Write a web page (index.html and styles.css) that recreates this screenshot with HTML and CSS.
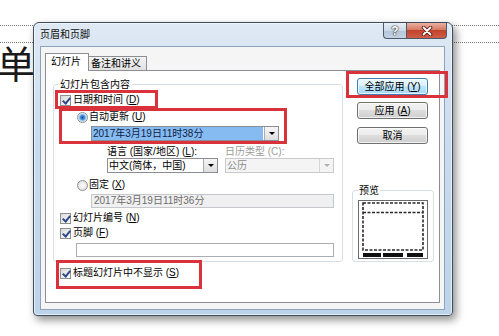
FILE: index.html
```html
<!DOCTYPE html>
<html lang="zh-CN">
<head>
  <meta charset="UTF-8" />
  <title>页眉和页脚</title>
  <link rel="stylesheet" href="styles.css">
</head>
<body>

  <div class="slide">
    <div class="rule"></div>
    <div class="rule short"></div>
    <div class="big-char">单</div>
  </div>

  <div class="dialog">
    <div class="titlebar">
      <span class="title">页眉和页脚</span>
      <div class="caption-btns">
        <span class="cap-btn help">?</span>
        <span class="cap-btn close">
          <svg width="12" height="10" viewBox="0 0 12 10">
            <path d="M2.5 1.5 L9.5 8.5 M9.5 1.5 L2.5 8.5" stroke="#5a1d14" stroke-width="3.6" stroke-linecap="round" fill="none"/>
            <path d="M2.5 1.5 L9.5 8.5 M9.5 1.5 L2.5 8.5" stroke="#fff" stroke-width="1.8" stroke-linecap="round" fill="none"/>
          </svg>
        </span>
      </div>
    </div>

    <div class="client">
      <div class="tabs">
        <span class="tab active">幻灯片</span>
        <span class="tab">备注和讲义</span>
      </div>

      <div class="panel">
        <div class="main">
          <fieldset class="group">
            <legend>幻灯片包含内容</legend>

            <div class="row r-date"><span class="box checked"></span>日期和时间 (<u>D</u>)</div>
            <div class="row r-auto"><span class="radio on"></span>自动更新 (<u>U</u>)</div>
            <div class="combo r-datebox">
              <span class="combo-text selected">2017年3月19日11时38分</span>
              <span class="drop"></span>
            </div>
            <div class="pair r-labels">
              <span>语言 (国家/地区) (<u>L</u>):</span>
              <span class="disabled">日历类型 (C):</span>
            </div>
            <div class="pair r-combos">
              <div class="combo">
                <span class="combo-text">中文(简体，中国)</span>
                <span class="drop"></span>
              </div>
              <div class="combo off">
                <span class="combo-text">公历</span>
                <span class="drop"></span>
              </div>
            </div>
            <div class="row r-fixed"><span class="radio"></span>固定 (<u>X</u>)</div>
            <div class="textbox off r-fixedbox">2017年3月19日11时36分</div>
            <div class="row r-num"><span class="box checked"></span>幻灯片编号 (<u>N</u>)</div>
            <div class="row r-footer"><span class="box checked"></span>页脚 (<u>F</u>)</div>
            <div class="textbox r-footbox"></div>
          </fieldset>

          <div class="row r-notitle"><span class="box checked"></span>标题幻灯片中不显示 (<u>S</u>)</div>
        </div>

        <div class="side">
          <button class="btn default">全部应用 (<u>Y</u>)</button>
          <button class="btn">应用 (<u>A</u>)</button>
          <button class="btn">取消</button>

          <fieldset class="preview">
            <legend>预览</legend>
            <svg class="thumb" width="70" height="59" viewBox="0 0 70 59">
              <rect x="0.5" y="0.5" width="69" height="58" fill="#fff" stroke="#6a6a6a"/>
              <rect x="5" y="3" width="60" height="47" fill="none" stroke="#2a2a2a" stroke-width="1.6" stroke-dasharray="3 1.5"/>
              <line x1="5" y1="12.5" x2="65" y2="12.5" stroke="#2a2a2a" stroke-width="1.6" stroke-dasharray="3 1.5"/>
              <rect x="5" y="53" width="18" height="4" fill="#111"/>
              <rect x="25" y="53" width="20" height="4" fill="#111"/>
              <rect x="49" y="53" width="16" height="4" fill="#111"/>
            </svg>
          </fieldset>
        </div>
      </div>
    </div>
  </div>

  <div class="mark mark-date"></div>
  <div class="mark mark-auto"></div>
  <div class="mark mark-title"></div>
  <div class="mark mark-apply"></div>

</body>
</html>
```

FILE: styles.css
```css
* {
  box-sizing: border-box;
}
body {
  margin: 0;
  width: 499px;
  height: 336px;
  overflow: hidden;
  position: relative;
  background: #fff;
  font-family: "Liberation Sans", "Noto Sans CJK SC", sans-serif;
  font-size: 10px;
  line-height: 14px;
  color: #000;
}
u {
  text-decoration: underline;
}

/* slide behind the dialog */
.slide {
  padding-top: 25px;
}
.rule {
  height: 17px;
  border-top: 1px dotted #7a7a7a;
}
.rule.short {
  height: 0;
}
.big-char {
  font-family: "Noto Sans CJK SC", serif;
  font-size: 38px;
  line-height: 38px;
  margin-left: -3px;
  color: #1a1a1a;
}

/* window */
.dialog {
  position: absolute;
  left: 33px;
  top: 22px;
  width: 420px;
  height: 294px;
  display: flex;
  flex-direction: column;
  padding: 0 7px 5px 6px;
  border: 1px solid #3e4d5c;
  border-radius: 6px 6px 4px 4px;
  background: linear-gradient(#dfe9f4, #c9dbee 40%, #bdd3ea);
  box-shadow: 3px 4px 8px rgba(0, 0, 0, 0.45), inset 0 0 0 1px rgba(255, 255, 255, 0.6);
}
.titlebar {
  height: 23px;
  display: flex;
  align-items: flex-start;
}
.title {
  align-self: center;
  padding-top: 1px;
  color: #111;
}
.caption-btns {
  margin-left: auto;
  margin-right: -2px;
  display: flex;
}
.cap-btn {
  height: 16px;
  display: flex;
  align-items: center;
  justify-content: center;
  border: 1px solid #4a5a6c;
  border-top: 0;
}
.help {
  width: 23px;
  border-right: 0;
  border-radius: 0 0 0 4px;
  background: linear-gradient(#e8eff7, #ccd9e7 50%, #b4c5d8 51%, #c4d3e3);
  color: #fff;
  font: bold 12px "Liberation Sans", sans-serif;
  text-shadow: 0 0 1px #333, 0 0 1px #333, 0 0 2px #555;
}
.close {
  width: 41px;
  border-radius: 0 0 4px 0;
  background: linear-gradient(#eab0a2, #d67a66 45%, #c2432c 50%, #cf5d45);
}

.client {
  flex: 1;
  display: flex;
  flex-direction: column;
  border: 1px solid #8ea3b9;
  background: #f5f5f5;
  padding: 6px 4px 6px 4px;
}

/* tabs */
.tabs {
  height: 17px;
  display: flex;
  align-items: flex-end;
  position: relative;
  z-index: 1;
}
.tab {
  height: 14px;
  padding: 0 5px 0 2px;
  border: 1px solid #8c8e94;
  border-bottom: 0;
  background: linear-gradient(#f4f4f4, #e1e1e1);
  line-height: 13px;
}
.tab.active {
  height: 18px;
  margin-bottom: -1px;
  padding: 0 7px 0 5px;
  background: #fff;
  line-height: 16px;
}
.tab + .tab {
  border-left: 0;
}
.panel {
  flex: 1;
  display: flex;
  background: #fff;
  border: 1px solid #8c8e94;
  padding: 7px 0 0 7px;
}

/* left column */
.main {
  width: 290px;
}
.group {
  margin: 0;
  min-width: 0;
  width: 290px;
  padding: 2px 8px 4px 6px;
  border: 1px solid #d5dfe5;
  border-radius: 3px;
}
.group legend, .preview legend {
  padding: 0 2px;
  margin-left: -2px;
  line-height: 13px;
}
.row {
  height: 14px;
  display: flex;
  align-items: center;
}
.box {
  flex: none;
  width: 11px;
  height: 11px;
  margin-right: 2px;
  position: relative;
  border: 1px solid #8e8f8f;
  background: linear-gradient(135deg, #dadada, #fbfbfb);
}
.box.checked::after {
  content: "";
  position: absolute;
  left: 3px;
  top: 0;
  width: 3px;
  height: 6px;
  border: solid #2f4a8c;
  border-width: 0 2px 2px 0;
  transform: rotate(40deg);
}
.radio {
  flex: none;
  width: 11px;
  height: 11px;
  margin-right: 1px;
  border-radius: 50%;
  border: 1px solid #8e8f8f;
  background: radial-gradient(circle, #fdfdfd, #d8d8d8);
}
.radio.on {
  background: radial-gradient(circle, #1c4f90 0, #3d8ad8 2px, #a8d3f6 3.5px, #eeeeee 4.5px);
}
.r-date {
  margin-left: 0;
}
.r-auto {
  margin: 3px 0 0 17px;
}
.combo {
  height: 15px;
  display: flex;
  border: 1px solid #8a8e94;
  background: #fff;
}
.combo-text {
  flex: 1;
  padding-left: 1px;
  line-height: 13px;
  white-space: nowrap;
  overflow: hidden;
}
.combo-text.selected {
  background: #86bbf1;
  color: #0f1e46;
}
.drop {
  flex: none;
  width: 14px;
  margin-left: 1px;
  display: flex;
  align-items: center;
  justify-content: center;
  border-left: 1px solid #a9abb0;
  background: linear-gradient(#f6f6f6, #dedede);
}
.drop::after {
  content: "";
  border-top: 3px solid #000;
  border-left: 3px solid transparent;
  border-right: 3px solid transparent;
}
.combo.off {
  border-color: #c8cacd;
  background: #f4f4f4;
  color: #8a8a8a;
}
.combo.off .drop {
  border-left-color: #d6d6d6;
  background: #f4f4f4;
}
.combo.off .drop::after {
  border-top-color: #b0b0b0;
}
.r-datebox {
  width: 188px;
  margin: 2px 0 0 31px;
}
.pair {
  display: grid;
  grid-template-columns: 111px 109px;
  gap: 7px;
  margin-left: 47px;
}
.r-labels {
  height: 13px;
  margin-top: 4px;
  line-height: 13px;
}
.disabled {
  color: #9a9a9a;
}
.r-fixed {
  margin: 5px 0 0 17px;
}
.textbox {
  height: 14px;
  border: 1px solid #abadb3;
  background: #fff;
  padding-left: 2px;
  line-height: 12px;
}
.textbox.off {
  border-color: #c4c8cc;
  background: #f0f0f0;
  color: #6d6d6d;
}
.r-fixedbox {
  width: 243px;
  margin: 2px 0 0 31px;
}
.r-num {
  margin-top: 3px;
}
.r-footer {
  margin-top: 1px;
}
.r-footbox {
  width: 258px;
  margin: 3px 0 0 16px;
}
.r-notitle {
  margin: 4px 0 0 7px;
}

/* right column */
.side {
  width: 82px;
  margin-left: 9px;
}
.btn {
  display: block;
  width: 71px;
  height: 17px;
  margin: 0 0 0 5px;
  padding: 0;
  font: inherit;
  line-height: 15px;
  color: #000;
  border: 1px solid #707070;
  border-radius: 3px;
  background: linear-gradient(#f2f2f2, #ebebeb 50%, #dddddd 50%, #cfcfcf);
  box-shadow: inset 0 0 0 1px rgba(255, 255, 255, 0.7);
}
.btn + .btn {
  margin-top: 7px;
}
.btn + .btn + .btn {
  margin-top: 8px;
}
.btn.default {
  border-color: #3c7fb1;
  background: linear-gradient(#eaf6fd, #d9f0fc 50%, #bee6fd 50%, #a7d9f5);
}
.preview {
  margin: 40px 0 0 0;
  min-width: 0;
  width: 82px;
  padding: 3px 0 2px 5px;
  border: 1px solid #d5dfe5;
  border-radius: 3px;
}
.preview legend {
  margin-left: 0;
  padding: 0 1px;
}
.thumb {
  display: block;
}

/* red annotation frames */
.mark {
  position: absolute;
  border: 3px solid #d9323a;
}
.mark-date {
  left: 55px;
  top: 90px;
  width: 103px;
  height: 19px;
}
.mark-auto {
  left: 59px;
  top: 108px;
  width: 228px;
  height: 36px;
}
.mark-title {
  left: 56px;
  top: 260px;
  width: 146px;
  height: 29px;
}
.mark-apply {
  left: 346px;
  top: 71px;
  width: 102px;
  height: 27px;
}
```
